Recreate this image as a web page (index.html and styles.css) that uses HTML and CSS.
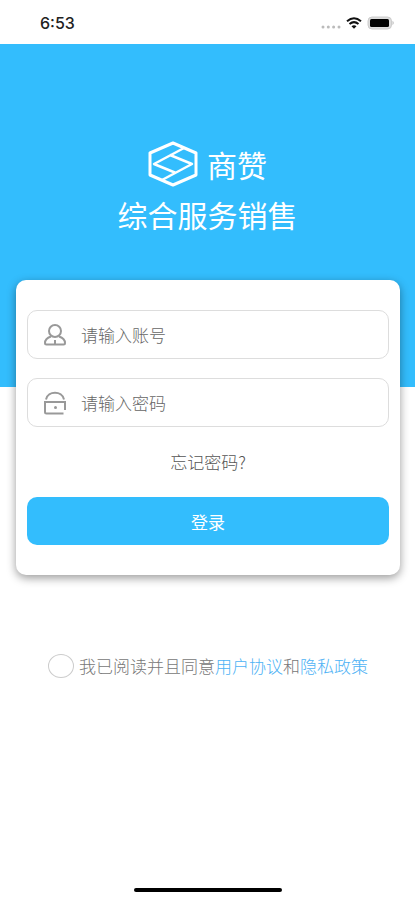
FILE: index.html
```html
<!DOCTYPE html>
<html lang="zh-CN">
<head>
<meta charset="utf-8">
<meta name="viewport" content="width=device-width, initial-scale=1">
<title>商赞</title>
<link rel="stylesheet" href="styles.css">
</head>
<body>
<header class="status">
  <span class="time">6:53</span>
  <span class="indicators">
    <svg class="signal" viewBox="0 0 20 4" aria-hidden="true"><circle cx="2" cy="2" r="1.5"/><circle cx="7.300" cy="2" r="1.5"/><circle cx="12.600" cy="2" r="1.5"/><circle cx="18" cy="2" r="1.5"/></svg>
    <svg class="wifi" viewBox="0 0 16 12" aria-hidden="true"><path d="M1 4.300Q8-1.700 15 4.300M3.500 7Q8 3.200 12.500 7"/><path class="tip" d="M5.500 9.200Q8 7.300 10.500 9.200L8 11.800Z"/></svg>
    <svg class="battery" viewBox="0 0 28 14" aria-hidden="true"><rect class="shell" x="1" y="1" width="23.500" height="12" rx="4"/><rect class="charge" x="3" y="3" width="19" height="8" rx="1.500"/><path class="cap" d="M25.500 4.800Q28 7 25.500 9.200Z"/></svg>
  </span>
</header>
<main>
  <section class="hero">
    <div class="brand">
      <svg class="logo" viewBox="0 0 50 46" aria-hidden="true"><path d="M25 2L48 12V34L25 44L2 34V12Z"/><path class="weave" d="M36 7L6 23L28 32M22 14L44 23L14 39"/></svg>
      <span>商赞</span>
    </div>
    <h1>综合服务销售</h1>
  </section>
  <form class="login" id="login">
    <div class="card">
      <label class="field">
        <svg class="icon" viewBox="0 0 24 24" aria-hidden="true"><circle cx="12" cy="8" r="6"/><path d="M8 13.500Q2 15.500 2 20Q2 21.500 3.500 21.500H20.500Q22 21.500 22 20Q22 15.500 16 13.500M12 17V21"/></svg>
        <input type="text" placeholder="请输入账号" aria-label="账号" autocomplete="username">
      </label>
      <label class="field">
        <svg class="icon" viewBox="0 0 24 24" aria-hidden="true"><path d="M3 8.500C5-.5 19-.5 21 8.500M22 19V11H2V21Q2 22.500 3.500 22.500H20.500"/><circle class="dot" cx="12.500" cy="16.500" r="1.500"/></svg>
        <input type="password" placeholder="请输入密码" aria-label="密码" autocomplete="current-password">
      </label>
      <a class="forgot" href="#forgot">忘记密码?</a>
      <button type="submit">登录</button>
    </div>
    <div class="agreement">
      <input type="checkbox" id="agree">
      <label for="agree">我已阅读并且同意<a href="#terms">用户协议</a>和<a href="#privacy">隐私政策</a></label>
    </div>
  </form>
</main>
<footer class="home"><span></span></footer>
</body>
</html>
```
FILE: styles.css
```css
* { box-sizing: border-box; }

body {
  display: flex;
  flex-direction: column;
  min-height: 100vh;
  margin: 0;
  background: #fff;
  color: #777;
  font: 300 17px/24px "Noto Sans CJK SC", sans-serif;
}

main { flex: 1; }

.status {
  display: flex;
  align-items: center;
  justify-content: space-between;
  height: 44px;
  padding: 2px 20px 0 40px;
  color: #222;
}
.time { font: 500 16px/20px Inter, sans-serif; }
.indicators { display: flex; align-items: center; gap: 5px; }
.signal { width: 20px; height: 4px; margin-top: 8px; fill: #bbb; }
.wifi { width: 16px; height: 12px; fill: none; stroke: #111; stroke-width: 2; }
.wifi .tip { fill: #111; stroke: none; }
.battery { width: 28px; height: 14px; }
.shell { fill: #ddd; stroke: #ccc; }
.charge { fill: #000; }
.cap { fill: #bbb; }

.hero {
  height: 343px;
  padding-top: 96px;
  background: #33bdfd;
  color: #fff;
  text-align: center;
}
.brand {
  display: flex;
  align-items: center;
  justify-content: center;
  gap: 9px;
  font-size: 30px;
  font-weight: 400;
  line-height: 48px;
}
.logo { width: 50px; height: 46px; fill: none; stroke: #fff; stroke-width: 3; stroke-linejoin: round; }
.logo .weave { stroke-width: 2.5; }
h1 { margin: 2px 0 0; font-size: 30px; font-weight: 400; line-height: 48px; }

.login { margin: -107px 15px 0 16px; }
.card {
  display: flex;
  flex-direction: column;
  padding: 30px 11px;
  border-radius: 10px;
  background: #fff;
  box-shadow: 0 3px 10px rgba(0, 0, 0, .4);
}
.field {
  display: flex;
  align-items: center;
  gap: 14px;
  height: 49px;
  padding: 0 15px;
  border: 1px solid #ddd;
  border-radius: 10px;
}
.field + .field { margin-top: 19px; }
.icon { flex: none; width: 24px; height: 24px; fill: none; stroke: #999; stroke-width: 2; }
.icon .dot { fill: #999; stroke: none; }
.field input {
  flex: 1;
  min-width: 0;
  padding: 0;
  border: 0;
  outline: 0;
  background: none;
  color: #555;
  font: inherit;
}
.field input::placeholder { color: #666; opacity: 1; }
.forgot {
  align-self: center;
  margin: 23px 0;
  color: #555;
  text-decoration: none;
}
.card button {
  height: 48px;
  padding: 2px 0 0;
  border: 0;
  border-radius: 10px;
  background: #33bdfd;
  color: #fff;
  font: inherit;
  font-weight: 400;
}

.agreement {
  display: flex;
  align-items: center;
  justify-content: center;
  gap: 5px;
  margin-top: 79px;
}
.agreement input {
  appearance: none;
  flex: none;
  width: 26px;
  height: 24px;
  margin: 0;
  border: 1px solid #ccc;
  border-radius: 50%;
}
.agreement input:checked { background: #33bdfd; }
.agreement a { color: #4db2f5; text-decoration: none; }

.home { display: flex; justify-content: center; padding-bottom: 8px; }
.home span { width: 148px; height: 4px; border-radius: 2px; background: #000; }
```
